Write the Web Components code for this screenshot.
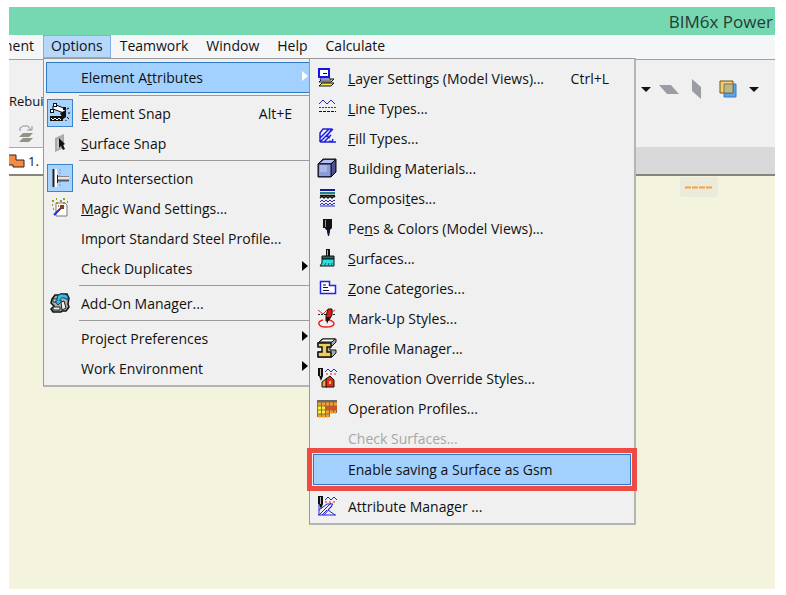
<!DOCTYPE html>
<html lang="en">
<head>
<meta charset="utf-8">
<meta name="viewport" content="width=device-width, initial-scale=1">
<title>BIM6x Power</title>
<style>
  body {
    margin: 7px 11px 6px 9px;
    background: #fff;
    color: #111;
    font-family: "Open Sans", "Noto Sans", sans-serif;
    font-size: 14px;
  }
</style>
</head>
<body>
<app-window>
  <title-bar slot="title">BIM6x Power</title-bar>

  <menu-bar slot="menu">
    <menu-tab clipped>ment</menu-tab>
    <menu-tab active>Options
      <menu-popup slot="popup">
        <menu-entry selected arrow>Element A<u>t</u>tributes
          <menu-popup slot="submenu">
            <menu-entry icon="layers" shortcut="Ctrl+L"><u>L</u>ayer Settings (Model Views)...</menu-entry>
            <menu-entry icon="lines"><u>L</u>ine Types...</menu-entry>
            <menu-entry icon="fills"><u>F</u>ill Types...</menu-entry>
            <menu-entry icon="cube">Building Materials...</menu-entry>
            <menu-entry icon="composites">Composi<u>t</u>es...</menu-entry>
            <menu-entry icon="pen">Pe<u>n</u>s &amp; Colors (Model Views)...</menu-entry>
            <menu-entry icon="brush"><u>S</u>urfaces...</menu-entry>
            <menu-entry icon="zone"><u>Z</u>one Categories...</menu-entry>
            <menu-entry icon="markup">Mark-Up Styles...</menu-entry>
            <menu-entry icon="profile">Profile Manager...</menu-entry>
            <menu-entry icon="renovation">Renovation Override Styles...</menu-entry>
            <menu-entry icon="operation">Operation Profiles...</menu-entry>
            <menu-entry disabled>Check Surfaces...</menu-entry>
            <menu-entry selected framed>Enable saving a Surface as Gsm</menu-entry>
            <menu-line></menu-line>
            <menu-entry icon="attributes">Attribute Manager ...</menu-entry>
          </menu-popup>
        </menu-entry>
        <menu-line></menu-line>
        <menu-entry icon="snap" checked shortcut="Alt+E"><u>E</u>lement Snap</menu-entry>
        <menu-entry icon="surface"><u>S</u>urface Snap</menu-entry>
        <menu-line></menu-line>
        <menu-entry icon="intersection" checked>Auto Intersection</menu-entry>
        <menu-entry icon="wand"><u>M</u>agic Wand Settings...</menu-entry>
        <menu-entry>Import Standard Steel Profile...</menu-entry>
        <menu-entry arrow>Check Duplicates</menu-entry>
        <menu-line></menu-line>
        <menu-entry icon="addon">Add-On Manager...</menu-entry>
        <menu-line></menu-line>
        <menu-entry arrow>Project Preferences</menu-entry>
        <menu-entry arrow>Work Environment</menu-entry>
      </menu-popup>
    </menu-tab>
    <menu-tab>Teamwork</menu-tab>
    <menu-tab>Window</menu-tab>
    <menu-tab>Help</menu-tab>
    <menu-tab>Calculate</menu-tab>
  </menu-bar>

  <tool-bar slot="tools"></tool-bar>
  <tab-strip slot="tabs">1.</tab-strip>
  <drawing-area></drawing-area>
</app-window>

<script>
const icons = {
  layers: `
    <path d="M2 14l3-3h12l-3 3zM2 18l3-3h12l-3 3z" fill="#f4e84a" stroke="#111"/>
    <path d="M2 1h10v8H2z" fill="#fff" stroke="#1414e0" stroke-width="2"/>
    <path d="M6 5h4v1H6z" fill="#113"/><path d="M4 10h8l2 2H3z" fill="#fff" stroke="#22a"/>`,
  lines: `
    <path d="M2 6l4-4 4 4 4-4 4 4" fill="none" stroke="#2a2ab8"/>
    <path d="M2 9.500h17" stroke="#2a2ae0" stroke-dasharray="2 1"/>
    <path d="M2 13.500h17" stroke="#111" stroke-dasharray="3 1"/>`,
  fills: `
    <path d="M3 14V5l3-4h9M3 14h16M3 10l9-9M3 14L16 1M7 14l7-7M12 13l3 1 1-3M14 2l-4 6 3 2" fill="none" stroke="#2020dc" stroke-width="1.500"/>`,
  cube: `
    <path d="M1 6l5-5h13v13l-5 5H1z" fill="#33375f" stroke="#0c0c20"/>
    <path d="M2 6h12v12H2z" fill="#8d9bd8"/><path d="M3 7h7v7H3z" fill="#a9b6ec"/>
    <path d="M3 5l4-3h11l-4 3z" fill="#b7c2ee"/><path d="M15 6l3-3v11l-3 3z" fill="#4c5390"/>
    <path d="M1 6h13v13M14 6l5-5" fill="none" stroke="#0c0c20"/>`,
  composites: `
    <path d="M3 2h15" stroke="#1818a0" stroke-width="2"/>
    <path d="M3 5h15" stroke="#1d8585" stroke-width="2"/>
    <path d="M3 10l2-2 2 2 2-2 2 2 2-2 2 2 2-2 1 1M3 7.500h15" fill="none" stroke="#111" stroke-width="1.500"/>
    <path d="M3 14l2-2 2 2 2-2 2 2 2-2 2 2 2-2 1 1M3 17l2-2 2 2 2-2 2 2 2-2 2 2 2-2 1 1M3 18h15" fill="none" stroke="#2a2ab4"/>`,
  pen: `
    <path d="M6 1h2v9h-2zM8 1h7v9l-2 2H9l-1-2z" fill="#111"/><path d="M8 2h1v7H8z" fill="#999"/>
    <path d="M10 12h3v2l-1 4h-1l-1-4z" fill="#14144c"/>`,
  brush: `
    <path d="M9 1h4v8H9z" fill="#111"/><path d="M10 2h1v6h-1z" fill="#aaa"/>
    <path d="M5 8h12v3H5z" fill="#1d6d6d" stroke="#111"/>
    <path d="M5 11h12v7H3l2-3z" fill="#29dede" stroke="#111"/>
    <path d="M7 18l2-3M11 18l1-3M14 18l1-3" stroke="#0d6670"/>`,
  zone: `
    <path d="M3.500 3.500h9v4h6v8h-15z" fill="#fff" stroke="#2222ee" stroke-width="1.500"/>
    <path d="M6 7h3M6 9.500h5M6 12.500h6" stroke="#113"/>`,
  markup: `
    <path d="M1 2l5 4 4-4M14 5l4-3" fill="none" stroke="#c8322c"/>
    <path d="M1 6.500h18" stroke="#222" stroke-dasharray="2 1"/>
    <path d="M6 12c-6 1-6 7 3 7s11-5 3-7" fill="none" stroke="#f01c1c" stroke-width="1.500"/>
    <path d="M11 1h4v6l-3 5-3 1V8z" fill="#d22018" stroke="#190d0d"/><path d="M9 9h4l-3 7z" fill="#111"/>`,
  profile: `
    <path d="M1 5l4-4h14v3l-4 4h-2v4h6v3l-4 4H1v-5h5V8H1z" fill="#aaa" stroke="#111"/>
    <path d="M2 4l4-3h12l-3 3z" fill="#fff" stroke="#111"/>
    <path d="M1 5h13v4h-4v5h4v5H1v-5h4V9H1z" fill="#efcf54" stroke="#111" stroke-width="1.500"/>`,
  renovation: `
    <path d="M1 0h5v8l-2 5-2-5H1z" fill="#111"/><path d="M3 1h1v7H3z" fill="#bbb"/>
    <path d="M8 4l3-3 3 3 3-3 3 3" fill="none" stroke="#2929a8"/><path d="M9 6h11" stroke="#d22" stroke-dasharray="2 2"/>
    <path d="M5 19v-5l5-4v9z" fill="#f0a138" stroke="#111"/><path d="M9 19v-8l4-3 4 4v7z" fill="#e12d1d" stroke="#111"/>
    <path d="M12 13h2v3h-2z" fill="#ffc04c"/>`,
  operation: `
    <path d="M0 2h20v13h-7v4H0z" fill="#847047"/><path d="M0 2h20v2H0z" fill="#666770"/>
    <path d="M1 6h19" stroke="#f3a032" stroke-width="3" stroke-dasharray="3 1"/>
    <path d="M1 10h8M1 14h8" stroke="#fff036" stroke-width="3" stroke-dasharray="3 1"/>
    <path d="M9 10h11" stroke="#e4472e" stroke-width="3" stroke-dasharray="3 1"/>
    <path d="M9 14h10M1 18h11" stroke="#f1a22d" stroke-width="3" stroke-dasharray="3 1"/>`,
  attributes: `
    <path d="M8 4l3-3 3 3 3-3 3 3" fill="none" stroke="#2929a8"/><path d="M8 6h12" stroke="#d22" stroke-dasharray="2 2"/>
    <path d="M2 19V8M1 19h18M2 19L14 7M7 19l8-9M2 14l8-6M10 8h6l-5 6 7 5M10 14l-5 5" fill="none" stroke="#2424dd"/>
    <path d="M1 0h5v8l-2 5-2-5H1z" fill="#111"/><path d="M3 1h1v7H3z" fill="#bbb"/>`,
  snap: `
    <path d="M3 3l3-1 10 4-2 4L3 6z" fill="#fff" stroke="#111"/>
    <path d="M3 0h4v4H3zM0 6h4v4H0zM13 4h3v3h-3z" fill="#111"/><path d="M4 1h2v2H4zM1 7h2v2H1z" fill="#fff"/>
    <path d="M0 13h13v5H0z" fill="#111"/><path d="M1 15l2 2 2-2 2 2 2-2 2 2" fill="none" stroke="#fff"/>
    <path d="M10 10l6-3v7l-3 2z" fill="#111"/><path d="M17 6l2-1M18 10h2M17 14l2 2M16 17v1" stroke="#111"/>`,
  surface: `
    <path d="M5 5l9-4v14l-9 4z" fill="#aaa"/><path d="M7 7l5-2v9l-5 2z" fill="#c6c6c6"/>
    <path d="M9 5l6 6-2 1 2 4-2 1-2-4-2 2z" fill="#111"/>`,
  intersection: `
    <path d="M4 1h3v18H4z" fill="#fff"/><path d="M3.500 1v18" stroke="#222" stroke-width="2"/>
    <path d="M10 1v18" stroke="#858bea" stroke-dasharray="2 1"/>
    <path d="M8 9h11v3H8z" fill="#e6e6e6"/><path d="M8 12.500h11" stroke="#555" stroke-width="2"/>
    <path d="M8 8.500h11" stroke="#888"/><path d="M7.500 7v8" stroke="#222"/>`,
  wand: `
    <path d="M6 5h9l2 2v11H6z" fill="#fff" stroke="#777"/>
    <path d="M4 17l8-8" stroke="#2525de" stroke-width="2"/><path d="M10 7h4v4h-4z" fill="#8b381c"/>
    <path d="M2 3h2M6 1h1M10 3h2M13 1h2M17 4h1M2 7h1M6 5h2M13 5h2M3 11h1M8 8h1" stroke="#999b28" stroke-width="2"/>`,
  addon: `
    <path d="M2 6l3-4h4l2-1h6l2 4-1 6 1 3-3 4h-4l-1 1H3l-2-3 3-3-3-3z" fill="#a9adad" stroke="#111" stroke-width="1.500"/>
    <path d="M3 6h5v3H3zM3 14h7v3H3zM11 9l3-1 2 7-4 2z" fill="#eee" stroke="#222"/>
    <path d="M5 8l3 4 4-4h-2c0-4 4-4 8-1V3c-4-3-10-3-11 2v3z" fill="#29bfe7" stroke="#084060"/>`
};

function svg(name) {
  return icons[name] ? `<svg width="20" height="20" viewBox="0 0 20 20" aria-hidden="true">${icons[name]}</svg>` : "";
}

class AppWindow extends HTMLElement {
  constructor() {
    super();
    this.attachShadow({ mode: "open" }).innerHTML = `
      <style>
        :host {
          display: flex;
          flex-direction: column;
          min-height: calc(100vh - 13px);
          background: #f4f3de;
        }
        main { flex: 1; }
      </style>
      <slot name="title"></slot>
      <slot name="menu"></slot>
      <slot name="tools"></slot>
      <slot name="tabs"></slot>
      <main><slot></slot></main>
    `;
  }
}

class TitleBar extends HTMLElement {
  constructor() {
    super();
    this.attachShadow({ mode: "open" }).innerHTML = `
      <style>
        :host {
          display: flex;
          align-items: center;
          justify-content: flex-end;
          height: 28px;
          padding-right: 2px;
          background: #76d8b0;
          color: #263b34;
          font-size: 17px;
        }
      </style>
      <slot></slot>
    `;
  }
}

class MenuBar extends HTMLElement {
  constructor() {
    super();
    this.attachShadow({ mode: "open" }).innerHTML = `
      <style>
        :host {
          display: block;
          background: #f5f6f8;
          border-bottom: 1px solid #a0a0a0;
        }
        nav { display: flex; height: 24px; }
      </style>
      <nav><slot></slot></nav>
    `;
  }
}

class MenuTab extends HTMLElement {
  constructor() {
    super();
    this.attachShadow({ mode: "open" }).innerHTML = `
      <style>
        :host { display: flex; position: relative; }
        :host([clipped]) {
          width: 34px;
          justify-content: flex-end;
          overflow: hidden;
        }
        button {
          height: 23px;
          padding: 0 8px 1px;
          border: 1px solid transparent;
          background: none;
          color: inherit;
          font: inherit;
          line-height: 20px;
          white-space: nowrap;
        }
        :host([active]) button {
          padding: 0 7px 1px;
          background: #b6d8fb;
          border-color: #7eb0e6;
        }
      </style>
      <button type="button"><slot></slot></button>
      <slot name="popup"></slot>
    `;
  }
}

class MenuPopup extends HTMLElement {
  constructor() {
    super();
    this.attachShadow({ mode: "open" }).innerHTML = `
      <style>
        :host {
          display: block;
          position: absolute;
          z-index: 10;
          top: 23px;
          left: 0;
          width: 268px;
          padding: 3px 2px 2px;
          background: #f0f0f0;
          border: 1px solid #999;
          border-right: 2px solid #b4b4b4;
          border-bottom: 2px solid #b4b4b4;
        }
        /* nested menu opens beside its parent, level with its top */
        :host([slot="submenu"]) {
          top: -1px;
          left: 265px;
          width: 318px;
          padding: 4px 3px 2px;
        }
      </style>
      <div role="menu"><slot></slot></div>
    `;
  }
}

class MenuEntry extends HTMLElement {
  constructor() {
    super();
    this.attachShadow({ mode: "open" });
  }

  connectedCallback() {
    const shortcut = this.getAttribute("shortcut");
    this.shadowRoot.innerHTML = `
      <style>
        :host { display: block; }
        button {
          display: flex;
          align-items: center;
          box-sizing: border-box;
          width: 100%;
          height: 30px;
          padding: 0 5px 0 0;
          border: 1px solid transparent;
          background: none;
          color: inherit;
          font: inherit;
          text-align: left;
          white-space: nowrap;
        }
        button:disabled { color: #a7a7a7; }
        .icon {
          display: flex;
          align-items: center;
          justify-content: center;
          box-sizing: border-box;
          width: 26px;
          height: 28px;
          margin-right: 8px;
          border: 1px solid transparent;
        }
        :host([checked]) .icon {
          background: #a8d3fc;
          border-color: #3b84c9;
        }
        .label { flex: 1; }
        kbd { font: inherit; padding-right: 16px; }
        .arrow { margin-bottom: 4px; fill: #000; }
        :host([selected]) button {
          height: 31px;
          background: #a3d1ff;
          border-color: #2f78c4;
        }
        :host([selected]) .arrow { fill: #fff; }
        :host([framed]) {
          position: relative;
          margin: 1px 0;
          box-shadow: 0 0 0 1px #fbe6ec, 0 0 0 6px #ee4b44;
        }
      </style>
      <button type="button" role="menuitem" ${this.hasAttribute("disabled") ? "disabled" : ""}>
        <span class="icon">${svg(this.getAttribute("icon"))}</span>
        <span class="label"><slot></slot></span>
        ${shortcut ? `<kbd>${shortcut}</kbd>` : ""}
        ${this.hasAttribute("arrow") ? `<svg class="arrow" width="6" height="10" viewBox="0 0 6 10"><path d="M0 0l6 5-6 5z"/></svg>` : ""}
      </button>
      <slot name="submenu"></slot>
    `;
  }
}

class MenuLine extends HTMLElement {
  constructor() {
    super();
    this.attachShadow({ mode: "open" }).innerHTML = `
      <style>
        :host { display: block; padding: 2px 0 2px 33px; }
        hr { margin: 0; border: 0; border-top: 1px solid #9c9c9c; }
      </style>
      <hr>
    `;
  }
}

class ToolBar extends HTMLElement {
  constructor() {
    super();
    this.attachShadow({ mode: "open" }).innerHTML = `
      <style>
        :host {
          display: flex;
          justify-content: space-between;
          height: 87px;
          background: #f0f0f0;
        }
        .left {
          display: flex;
          flex-direction: column;
          justify-content: flex-end;
          gap: 15px;
          padding-bottom: 4px;
        }
        .left svg { margin-left: 9px; }
        .label { font-size: 13px; }
        .right {
          display: flex;
          align-items: center;
          gap: 8px;
          height: 58px;
          padding-right: 16px;
        }
        button {
          display: flex;
          padding: 0;
          border: 0;
          background: none;
          color: inherit;
          font: inherit;
        }
      </style>
      <div class="left">
        <button type="button"><span class="label">Rebui</span></button>
        <button type="button" aria-label="Refresh layers">
          <svg width="16" height="18" viewBox="0 0 16 18">
            <path d="M2 6V3l3-2h5l3 4M9 5h5V1" fill="none" stroke="#8d9096"/>
            <path d="M1 12l4-4h10l-4 4zM1 17l4-4h10l-4 4z" fill="#929287"/>
          </svg>
        </button>
      </div>
      <div class="right">
        <button type="button" aria-label="More"><svg width="10" height="5" viewBox="0 0 10 5"><path d="M0 0h10L5 5z" fill="#111"/></svg></button>
        <button type="button" aria-label="Horizontal plane"><svg width="20" height="20" viewBox="0 0 20 20"><path d="M0 6h12l8 9H8z" fill="#9a9ea4"/></svg></button>
        <button type="button" aria-label="Vertical plane"><svg width="20" height="20" viewBox="0 0 20 20"><path d="M5 0l9 8v12l-9-8z" fill="#9a9ea4"/></svg></button>
        <button type="button" aria-label="Trace reference">
          <svg width="26" height="20" viewBox="4 0 26 20">
            <path d="M13 5h12v13H13z" fill="#5ca3ea" stroke="#347bc4"/>
            <path d="M9 2h13v12H9z" fill="#f4cf72" stroke="#6e5519"/>
            <path d="M13 5h9v9h-9z" fill="#b9b78b" stroke="#7b764f"/>
          </svg>
        </button>
        <button type="button" aria-label="Trace options"><svg width="10" height="5" viewBox="0 0 10 5"><path d="M0 0h10L5 5z" fill="#111"/></svg></button>
      </div>
    `;
  }
}

class TabStrip extends HTMLElement {
  constructor() {
    super();
    this.attachShadow({ mode: "open" }).innerHTML = `
      <style>
        :host {
          display: flex;
          height: 27px;
          background: #d9d9d9;
          border-bottom: 2px solid #85857e;
          font-size: 13px;
        }
        button {
          display: flex;
          align-items: center;
          gap: 3px;
          width: 120px;
          padding: 0;
          border: 0;
          border-top: 1px solid #aaa;
          background: #fff;
          color: inherit;
          font: inherit;
        }
      </style>
      <button type="button">
        <svg width="16" height="14" viewBox="0 0 16 14"><path d="M-1 1h8v5h8v7H4v-2h-5" fill="#f28c45" stroke="#3c2010"/></svg>
        <slot></slot>
      </button>
    `;
  }
}

class DrawingArea extends HTMLElement {
  constructor() {
    super();
    this.attachShadow({ mode: "open" }).innerHTML = `
      <style>
        :host {
          display: flex;
          justify-content: flex-end;
          padding: 1px 57px 0 0;
        }
        .marker {
          display: flex;
          align-items: center;
          justify-content: center;
          width: 38px;
          height: 20px;
          border-radius: 3px;
          background: #ebebdc;
        }
      </style>
      <div class="marker">
        <svg width="28" height="3" viewBox="0 0 28 3"><path d="M0 1.500h28" stroke="#ffa040" stroke-width="2" stroke-dasharray="6 1"/></svg>
      </div>
    `;
  }
}

customElements.define("app-window", AppWindow);
customElements.define("title-bar", TitleBar);
customElements.define("menu-bar", MenuBar);
customElements.define("menu-tab", MenuTab);
customElements.define("menu-popup", MenuPopup);
customElements.define("menu-entry", MenuEntry);
customElements.define("menu-line", MenuLine);
customElements.define("tool-bar", ToolBar);
customElements.define("tab-strip", TabStrip);
customElements.define("drawing-area", DrawingArea);
</script>
</body>
</html>
